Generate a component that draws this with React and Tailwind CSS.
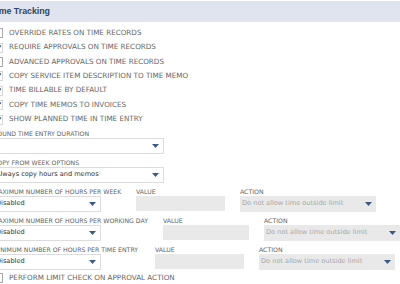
import React from 'react'

const font = { fontFamily: '"DejaVu Sans", Verdana, sans-serif' }

function Caret({ className = '' }) {
  return (
    <svg width="7" height="4" viewBox="0 0 7 4" className={className}>
      <path d="M0 0h7L3.5 4z" fill="#3d5a84" />
    </svg>
  )
}

function Check({ checked, label }) {
  return (
    <div className="flex h-[14.4px] items-center gap-[6px]">
      <div
        className={
          'flex h-[10px] w-[10px] shrink-0 items-center justify-center border bg-white ' +
          (checked ? 'border-[#d8d8d8]' : 'border-[#a9a9a9]')
        }
      >
        {checked && (
          <svg width="8" height="8" viewBox="0 0 8 8">
            <path d="M1.5 4.2 3.2 6 6.8 1.5" stroke="#2f4f80" strokeWidth="1.4" fill="none" />
          </svg>
        )}
      </div>
      <span className="whitespace-nowrap text-[7.2px] text-[#666]">{label}</span>
    </div>
  )
}

function Select({ value, width, disabled }) {
  return (
    <div
      className={
        'flex h-[16px] items-center justify-between pl-[2px] pr-[4px] text-[6.6px] ' +
        (disabled ? 'bg-[#e9e9e9] text-[#a8a8a8]' : 'border border-[#dcdcdc] bg-white text-[#333]')
      }
      style={{ width }}
    >
      <span className="whitespace-nowrap">{value}</span>
      <Caret />
    </div>
  )
}

function Label({ children }) {
  return <div className="h-[8px] whitespace-nowrap text-[6.2px] leading-[8px] text-[#5f5f5f]">{children}</div>
}

function LimitRow({ label, first }) {
  return (
    <div className="flex gap-[15px]">
      <div className="flex flex-col" style={{ width: first }}>
        <Label>{label}</Label>
        <Select value="Disabled" width={108} />
      </div>
      <div className="flex w-[89px] flex-col">
        <Label>VALUE</Label>
        <div className="h-[15px] bg-[#e9e9e9]" />
      </div>
      <div className="flex w-[136px] flex-col">
        <Label>ACTION</Label>
        <Select value="Do not allow time outside limit" width={136} disabled />
      </div>
    </div>
  )
}

export default function App() {
  const checks = [
    ['OVERRIDE RATES ON TIME RECORDS', false],
    ['REQUIRE APPROVALS ON TIME RECORDS', true],
    ['ADVANCED APPROVALS ON TIME RECORDS', false],
    ['COPY SERVICE ITEM DESCRIPTION TO TIME MEMO', true],
    ['TIME BILLABLE BY DEFAULT', true],
    ['COPY TIME MEMOS TO INVOICES', true],
    ['SHOW PLANNED TIME IN TIME ENTRY', true],
  ]

  return (
    <div className="h-[284px] w-[400px] overflow-hidden bg-white" style={font}>
      <div className="mt-[1px] flex h-[21px] items-center bg-[#dfe4ee] pl-[1px]">
        <span
          className="ml-[-10px] whitespace-nowrap text-[8.8px] font-bold text-[#2e4667]"
          style={{ fontFamily: '"Liberation Sans", Arial, sans-serif' }}
        >
          Time Tracking
        </span>
      </div>

      <div className="ml-[-7px] pt-[4px]">
        {checks.map(([label, checked]) => (
          <Check key={label} label={label} checked={checked} />
        ))}

        <div className="mt-[3.5px] flex flex-col">
          <Label>ROUND TIME ENTRY DURATION</Label>
          <Select value="" width={171} />
        </div>
        <div className="mt-[5px] flex flex-col">
          <Label>COPY FROM WEEK OPTIONS</Label>
          <Select value="Always copy hours and memos" width={171} />
        </div>

        <div className="mt-[5px] flex flex-col gap-[5px]">
          <LimitRow label="MAXIMUM NUMBER OF HOURS PER WEEK" first={128} />
          <LimitRow label="MAXIMUM NUMBER OF HOURS PER WORKING DAY" first={155} />
          <LimitRow label="MINIMUM NUMBER OF HOURS PER TIME ENTRY" first={147} />
        </div>

        <div className="mt-[1px]">
          <Check label="PERFORM LIMIT CHECK ON APPROVAL ACTION" checked={false} />
        </div>
      </div>
    </div>
  )
}
